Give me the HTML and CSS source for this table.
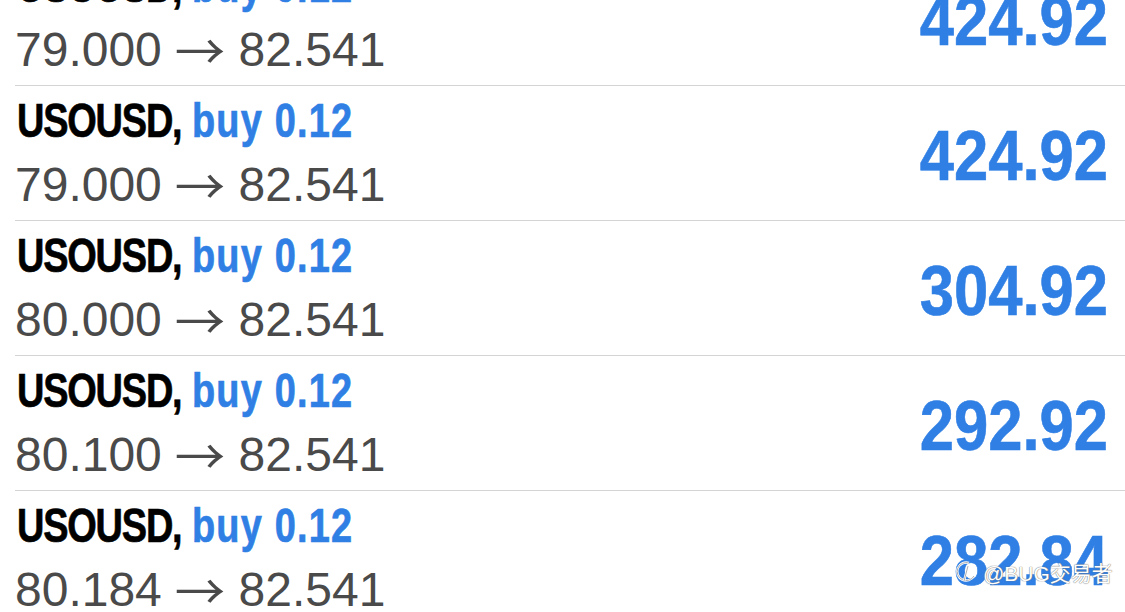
FILE: index.html
```html
<!DOCTYPE html>
<html lang="en">
<head>
  <meta charset="UTF-8">
  <title>Trades</title>
  <link rel="stylesheet" href="styles.css">
</head>
<body>
  <div class="trades">
    <div class="trade">
      <div class="info">
        <div class="title"><span class="symbol">USOUSD,</span> <span class="side">buy 0.12</span></div>
        <div class="prices">79.000 <span class="arrow">→</span> 82.541</div>
      </div>
      <div class="profit">424.92</div>
    </div>
    <div class="trade">
      <div class="info">
        <div class="title"><span class="symbol">USOUSD,</span> <span class="side">buy 0.12</span></div>
        <div class="prices">79.000 <span class="arrow">→</span> 82.541</div>
      </div>
      <div class="profit">424.92</div>
    </div>
    <div class="trade">
      <div class="info">
        <div class="title"><span class="symbol">USOUSD,</span> <span class="side">buy 0.12</span></div>
        <div class="prices">80.000 <span class="arrow">→</span> 82.541</div>
      </div>
      <div class="profit">304.92</div>
    </div>
    <div class="trade">
      <div class="info">
        <div class="title"><span class="symbol">USOUSD,</span> <span class="side">buy 0.12</span></div>
        <div class="prices">80.100 <span class="arrow">→</span> 82.541</div>
      </div>
      <div class="profit">292.92</div>
    </div>
    <div class="trade">
      <div class="info">
        <div class="title"><span class="symbol">USOUSD,</span> <span class="side">buy 0.12</span></div>
        <div class="prices">80.184 <span class="arrow">→</span> 82.541</div>
      </div>
      <div class="profit">282.84</div>
    </div>
  </div>

  <div class="watermark">
    <svg width="22" height="24" viewBox="0 0 22 24">
      <path d="M14 3 A9 9 0 1 0 19 16" fill="none" stroke="#fff" stroke-width="2.4"/>
      <path d="M14 3 A9 9 0 1 0 19 16" fill="none" stroke="#999" stroke-width="0.8"/>
      <path d="M13 6 L9 21" stroke="#fff" stroke-width="2.4"/>
      <path d="M13 6 L9 21" stroke="#999" stroke-width="0.8"/>
    </svg>
    <span>@BUG交易者</span>
  </div>
</body>
</html>
```

FILE: styles.css
```css
body {
  margin: 0;
  background-color: #fff;
  font-family: "Liberation Sans", Arial, sans-serif;
  overflow: hidden;
  height: 612px;
}
.trades {
  margin-top: -49px;
}
.trade {
  display: flex;
  justify-content: space-between;
  margin-left: 15px;
  padding: 5px 17px 5px 0;
  height: 124px;
  border-bottom: 1px solid #d4d4d4;
}
.title {
  font-size: 48px;
  font-weight: bold;
  line-height: 60px;
  white-space: nowrap;
  transform: scaleX(0.79);
  transform-origin: left;
  margin-left: 2px;
}
.symbol {
  color: #000;
  letter-spacing: -1.5px;
  -webkit-text-stroke: 0.7px #000;
}
.side {
  color: #2f7fe4;
  letter-spacing: 1.5px;
  -webkit-text-stroke: 0.7px #2f7fe4;
}
.prices {
  margin-top: 4px;
  font-size: 48px;
  line-height: 60px;
  color: #4a4a4a;
  white-space: nowrap;
}
.arrow {
  display: inline-block;
  font-family: "Noto Sans CJK SC", sans-serif;
  font-size: 48px;
  line-height: 1;
  margin: 0 1px;
  transform: translateY(3px) scaleX(1.05);
}
.profit {
  padding-top: 25px;
  font-size: 70px;
  font-weight: bold;
  line-height: 80px;
  color: #2f7fe4;
  transform: scaleX(0.88);
  transform-origin: right;
  -webkit-text-stroke: 0.6px #2f7fe4;
}
.watermark {
  position: absolute;
  left: 955px;
  top: 557px;
  display: flex;
  align-items: center;
  gap: 6px;
  color: #fff;
  font-family: "Liberation Sans", "Noto Sans CJK SC", sans-serif;
  font-size: 21px;
  text-shadow: 0 0 1px #777, 0 0 1px #777;
}
```
